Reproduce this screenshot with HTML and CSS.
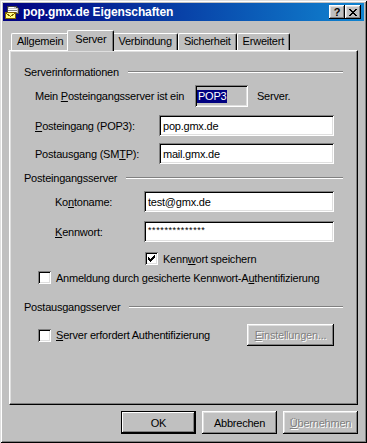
FILE: index.html
```html
<!DOCTYPE html>
<html lang="de">
<head>
<meta charset="utf-8">
<title>pop.gmx.de Eigenschaften</title>
<link rel="stylesheet" href="styles.css">
</head>
<body>
<div class="window">
  <div class="titlebar">
    <svg class="title-icon" width="16" height="16" viewBox="0 0 16 16" shape-rendering="crispEdges">
      <path d="M4 2h7l3 2v5H3V4z" fill="#c0c0c0" stroke="#404040"/>
      <path d="M5 3h5M4 5h9M4 7h9" stroke="#fff"/>
      <path d="M4 6h9M4 8h9" stroke="#808080"/>
      <rect x="1.5" y="8.5" width="10" height="6" fill="#ffff80" stroke="#806000"/>
      <path d="M2 9l4.5 3.5L11 9" fill="none" stroke="#806000"/>
    </svg>
    <span class="title">pop.gmx.de Eigenschaften</span>
    <div class="tb-btn"><span class="q">?</span></div>
    <div class="tb-btn">
      <svg width="8" height="7" viewBox="0 0 8 7" shape-rendering="crispEdges"><path d="M0 0h2v1h1v1h2V1h1V0h2v1H7v1H6v1H5v1h1v1h1v1h1v1H6V6H5V5H3v1H2v1H0V6h1V5h1V4h1V3H2V2H1V1H0z" fill="#000"/></svg>
    </div>
  </div>

  <div class="tabs">
    <div class="tab">Allgemein</div>
    <div class="tab active">Server</div>
    <div class="tab">Verbindung</div>
    <div class="tab">Sicherheit</div>
    <div class="tab">Erweitert</div>
  </div>

  <div class="panel">
    <div class="ghead g1"><span>Serverinformationen</span><div class="rule"></div></div>
    <div class="row r-type">
      <span class="lbl">Mein <u>P</u>osteingangsserver ist ein</span>
      <div class="ro-box"><span class="sel">POP3</span></div>
      <span class="after">Server.</span>
    </div>
    <div class="row r-server r-in">
      <span class="lbl"><u>P</u>osteingang (POP3):</span>
      <div class="field">pop.gmx.de</div>
    </div>
    <div class="row r-server r-out">
      <span class="lbl">Postausgang (SM<u>T</u>P):</span>
      <div class="field">mail.gmx.de</div>
    </div>

    <div class="ghead g2"><span>Posteingangsserver</span><div class="rule"></div></div>
    <div class="row r-account r-name">
      <span class="lbl">Ko<u>n</u>toname:</span>
      <div class="field">test@gmx.de</div>
    </div>
    <div class="row r-account r-pw">
      <span class="lbl"><u>K</u>ennwort:</span>
      <div class="field pw">**************</div>
    </div>
    <div class="row r-check r-save">
      <div class="cb">
        <svg width="13" height="13" viewBox="0 0 13 13" shape-rendering="crispEdges"><path d="M9 3h1v3H9v1H8v1H7v1H6v1H5V9H4V8H3V5h1v1h1v1h1V6h1V5h1V4h1z" fill="#000"/></svg>
      </div>
      <span>Kenn<u>w</u>ort speichern</span>
    </div>
    <div class="row r-check r-spa">
      <div class="cb"></div>
      <span>Anmeldung durch gesicherte Kennwort-A<u>u</u>thentifizierung</span>
    </div>

    <div class="ghead g3"><span>Postausgangsserver</span><div class="rule"></div></div>
    <div class="row r-check r-auth">
      <div class="cb"></div>
      <span><u>S</u>erver erfordert Authentifizierung</span>
      <button class="btn disabled settings" type="button"><span><u>E</u>instellungen...</span></button>
    </div>
  </div>

  <div class="actions">
    <button class="btn default" type="button">OK</button>
    <button class="btn" type="button">Abbrechen</button>
    <button class="btn disabled" type="button"><span><u>Ü</u>bernehmen</span></button>
  </div>
</div>
</body>
</html>
```

FILE: styles.css
```css
* { box-sizing: border-box; }

html, body {
  margin: 0;
  background: #c0c0c0;
}

body {
  font-family: "Liberation Sans", Arial, sans-serif;
  font-size: 11px;
  letter-spacing: -0.22px;
  color: #000;
}

u { text-decoration: underline; text-underline-offset: 1px; }

.window {
  width: 367px;
  height: 443px;
  padding: 3px;
  background: #c0c0c0;
  box-shadow: inset 1px 1px #dfdfdf, inset -1px -1px #000, inset 2px 2px #fff, inset -2px -2px #808080;
  display: flex;
  flex-direction: column;
}

/* title bar */
.titlebar {
  height: 18px;
  background: linear-gradient(90deg, #000080, #1084d0);
  display: flex;
  align-items: center;
  padding: 0 3px 0 1px;
  color: #fff;
}

.title-icon { flex: none; margin-right: 3px; }

.title {
  flex: 1;
  font-weight: bold;
  font-size: 12px;
  letter-spacing: -0.1px;
  white-space: nowrap;
}

.tb-btn {
  width: 16px;
  height: 14px;
  background: #c0c0c0;
  box-shadow: inset -1px -1px #000, inset 1px 1px #fff, inset -2px -2px #808080, inset 2px 2px #dfdfdf;
  display: flex;
  align-items: center;
  justify-content: center;
  color: #000;
}

.tb-btn .q {
  font-weight: bold;
  font-size: 11px;
  line-height: 1;
  margin-top: 1px;
}

/* tabs */
.tabs {
  display: flex;
  align-items: flex-end;
  height: 21px;
  margin: 8px 0 0 8px;
}

.tab {
  height: 17px;
  padding: 0 5px;
  line-height: 15px;
  background: #c0c0c0;
  border-top: 1px solid #fff;
  border-left: 1px solid #fff;
  border-right: 1px solid #000;
  border-top-left-radius: 2px;
  border-top-right-radius: 2px;
  box-shadow: inset -1px 0 #808080;
  white-space: nowrap;
}

.tab.active {
  height: 21px;
  margin: 0 -2px -1px;
  padding: 0 7px;
  line-height: 17px;
  position: relative;
  z-index: 1;
}

/* panel */
.panel {
  margin-left: 6px;
  width: 349px;
  height: 355px;
  border-top: 1px solid #fff;
  border-left: 1px solid #fff;
  border-right: 1px solid #000;
  border-bottom: 1px solid #000;
  box-shadow: inset -1px -1px #808080, inset 1px 1px #dfdfdf;
  padding: 0 14px;
  display: flex;
  flex-direction: column;
}

.ghead {
  display: flex;
  align-items: center;
  gap: 9px;
  height: 13px;
  flex: none;
}

.ghead .rule {
  flex: 1;
  height: 2px;
  border-top: 1px solid #808080;
  border-bottom: 1px solid #fff;
}

.g1 { margin-top: 14px; }
.g2 { margin-top: 7px; }
.g3 { margin-top: 16px; }

.row {
  display: flex;
  align-items: center;
  flex: none;
  white-space: nowrap;
}

.r-type { margin-top: 7px; height: 22px; padding-left: 11px; }
.r-type .lbl { width: 160px; }

.ro-box {
  width: 53px;
  height: 22px;
  padding: 3px 2px;
  background: #c0c0c0;
  box-shadow: inset 1px 1px #808080, inset -1px -1px #fff, inset 2px 2px #000, inset -2px -2px #dfdfdf;
  display: flex;
  align-items: center;
}

.sel {
  background: #000080;
  color: #fff;
  padding: 0 1px;
  line-height: 13px;
}

.after { margin-left: 9px; }

.r-server { height: 21px; padding-left: 11px; }
.r-in { margin-top: 8px; }
.r-out { margin-top: 7px; }
.r-server .lbl { width: 124px; }
.r-server .field { width: 175px; }

.field {
  height: 21px;
  background: #fff;
  box-shadow: inset 1px 1px #808080, inset -1px -1px #fff, inset 2px 2px #000, inset -2px -2px #dfdfdf;
  padding: 0 4px;
  display: flex;
  align-items: center;
}

.field.pw {
  align-items: flex-start;
  padding-top: 4px;
  font-size: 9px;
  letter-spacing: 0.6px;
}

.r-account { height: 21px; padding-left: 31px; }
.r-name { margin-top: 7px; }
.r-pw { margin-top: 9px; }
.r-account .lbl { width: 89px; }
.r-account .field { width: 190px; }

.r-check { gap: 5px; }
.r-save { height: 13px; margin-top: 10px; padding-left: 121px; }
.r-spa { height: 13px; margin-top: 6px; padding-left: 14px; }
.r-auth { height: 22px; margin-top: 11px; padding-left: 14px; }

.cb {
  width: 13px;
  height: 13px;
  flex: none;
  background: #fff;
  box-shadow: inset 1px 1px #808080, inset -1px -1px #fff, inset 2px 2px #000, inset -2px -2px #dfdfdf;
}

.cb svg { display: block; }

/* buttons */
.btn {
  width: 75px;
  height: 23px;
  padding: 0;
  border: none;
  background: #c0c0c0;
  font: inherit;
  letter-spacing: inherit;
  color: #000;
  box-shadow: inset -1px -1px #000, inset 1px 1px #fff, inset -2px -2px #808080, inset 2px 2px #dfdfdf;
  display: flex;
  align-items: center;
  justify-content: center;
}

.btn.default {
  box-shadow: inset 0 0 0 1px #000, inset -2px -2px #000, inset 2px 2px #fff, inset -3px -3px #808080;
}

.btn.disabled {
  color: #808080;
  text-shadow: 1px 1px #fff;
}

.settings {
  width: 87px;
  height: 22px;
  margin-left: auto;
  margin-right: 9px;
}

.actions {
  display: flex;
  justify-content: flex-end;
  gap: 6px;
  margin-top: 6px;
  padding-right: 6px;
}
```
